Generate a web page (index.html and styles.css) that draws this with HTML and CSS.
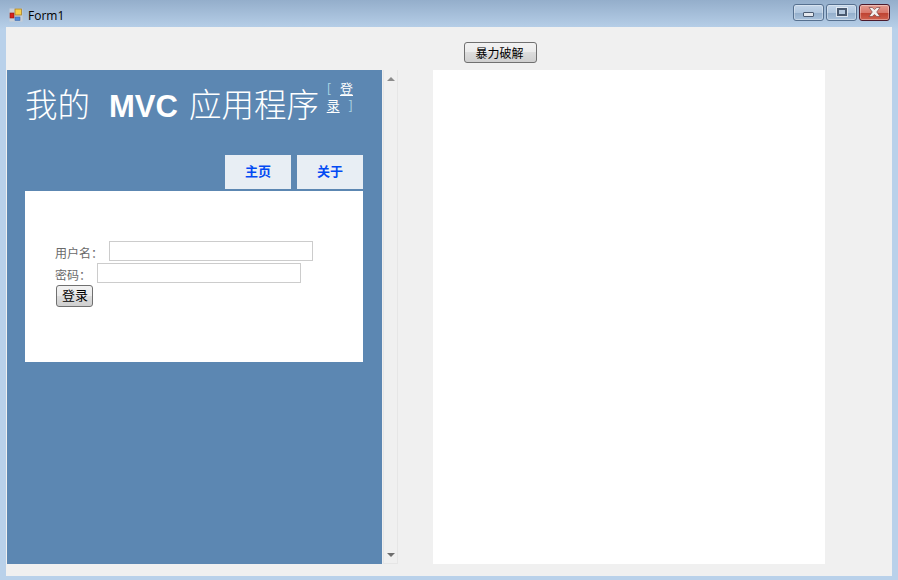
FILE: index.html
```html
<!DOCTYPE html>
<html lang="zh-CN">
    <head>
        <meta charset="UTF-8" />
        <title>Form1</title>
        <link rel="stylesheet" href="styles.css">
    </head>
    <body>
        <div class="ventana">
            <div class="barraTitulo">
                <svg class="iconoForm" width="14" height="14" viewBox="0 0 14 14">
                    <rect x="0.5" y="0.5" width="13" height="13" fill="#c9cfd6" />
                    <rect x="1" y="5" width="4" height="5" fill="#d8231c" stroke="#8c1410" stroke-width="0.6" />
                    <rect x="6" y="1" width="6.5" height="6" fill="#f7cf4a" stroke="#a9812a" stroke-width="0.8" />
                    <rect x="6" y="9" width="5" height="3.5" fill="#4f8bdc" stroke="#3c69ad" stroke-width="0.6" />
                </svg>
                <span class="tituloForm">Form1</span>
                <div class="botonesVentana">
                    <div class="botonVentana">
                        <span class="glifoMin"></span>
                    </div>
                    <div class="botonVentana botonMax">
                        <span class="glifoMax"></span>
                    </div>
                    <div class="botonVentana botonCerrar">
                        <svg width="13" height="10" viewBox="0 0 13 10">
                            <path d="M1 .5h3.2L6.500 2.500 8.800 .5H12L8.700 5 12 9.500H8.800L6.500 7.500 4.200 9.500H1L4.300 5z" fill="#f4f0ef" stroke="#6b3a3a" stroke-width="0.6" />
                        </svg>
                    </div>
                </div>
            </div>
            <div class="cliente">
                <div class="filaBoton">
                    <button class="botonWin botonCrack">暴力破解</button>
                </div>
                <div class="filaPaneles">
                    <div class="navegador">
                        <div class="pagina">
                            <header class="cabecera">
                                <h1 class="tituloApp">我的 <b>MVC</b> 应用程序</h1>
                                <div class="zonaLogin">[ <a href="#">登录</a> ]</div>
                            </header>
                            <nav class="menu">
                                <a href="#">主页</a>
                                <a href="#">关于</a>
                            </nav>
                            <div class="contenido">
                                <div class="filaCampo">
                                    <label class="etiqueta etiquetaUsuario">用户名：</label>
                                    <input class="campo" type="text">
                                </div>
                                <div class="filaCampo">
                                    <label class="etiqueta etiquetaClave">密码：</label>
                                    <input class="campo" type="password">
                                </div>
                                <button class="botonWin botonLogin">登录</button>
                            </div>
                        </div>
                    </div>
                    <div class="scroll">
                        <span class="flechaArriba"></span>
                        <span class="flechaAbajo"></span>
                    </div>
                    <div class="panelBlanco"></div>
                </div>
            </div>
        </div>
    </body>
</html>
```

FILE: styles.css
```css
*{
    margin: 0;
    padding: 0;
    box-sizing: border-box;
}
html, body{
    width: 898px;
    height: 580px;
    overflow: hidden;
}
.ventana{
    width: 898px;
    height: 580px;
    padding: 0 6px 4px 6px;
    background: linear-gradient(to bottom, #94aecb 0, #b9d1ea 30px, #b9d1ea 100%);
    font-family: "Noto Sans CJK SC", sans-serif;
}
.barraTitulo{
    height: 27px;
    display: flex;
    align-items: center;
    padding-top: 4px;
    padding-left: 3px;
    padding-right: 2px;
}
.iconoForm{
    margin-top: -1px;
}
.tituloForm{
    margin-left: 5px;
    font-family: "Open Sans", sans-serif;
    font-size: 12px;
    color: #000;
}
.botonesVentana{
    margin-left: auto;
    margin-top: -7px;
    display: flex;
    gap: 2px;
}
.botonVentana{
    width: 31px;
    height: 17px;
    display: flex;
    align-items: center;
    justify-content: center;
    border: 1px solid #56708f;
    border-radius: 3px;
    background: linear-gradient(to bottom, #c3d5e9 0, #b1c7df 50%, #93aecb 52%, #a9c2dc 100%);
    box-shadow: inset 0 0 0 1px rgba(255, 255, 255, 0.35);
}
.botonCerrar{
    border-color: #4b1a2c;
    background: linear-gradient(to bottom, #e39a8f 0, #d9786b 50%, #bd4130 52%, #d0614f 100%);
}
.glifoMin{
    width: 11px;
    height: 5px;
    margin-top: 5px;
    background: #e4e8ee;
    border: 1px solid #4a5a70;
    border-radius: 1px;
}
.glifoMax{
    width: 10px;
    height: 8px;
    border: 2px solid #4a5a70;
    background: #b5c9df;
    box-shadow: 0 0 0 1px rgba(235, 240, 246, 0.8);
}
.cliente{
    height: 549px;
    background-color: #f0f0f0;
}
.filaBoton{
    height: 43px;
    display: flex;
    align-items: flex-start;
    padding-top: 15px;
    padding-left: 458px;
}
.botonWin{
    border: 1px solid #707070;
    border-radius: 3px;
    background: linear-gradient(to bottom, #f2f2f2 0, #ebebeb 50%, #dddddd 50%, #cfcfcf 100%);
    color: #000;
    font-family: "Noto Sans CJK SC", sans-serif;
    font-size: 12px;
    line-height: 1;
}
.botonCrack{
    width: 73px;
    height: 21px;
    padding-right: 2px;
}
.filaPaneles{
    display: flex;
    height: 494px;
}
.navegador{
    width: 375px;
    margin-left: 1px;
    background-color: #5c87b2;
}
.pagina{
    width: 356px;
    padding-left: 18px;
}
.cabecera{
    height: 85px;
    display: flex;
    align-items: flex-start;
}
.tituloApp{
    width: 302px;
    padding-top: 12px;
    font-size: 32.5px;
    line-height: 48px;
    font-weight: 300;
    color: #fff;
    white-space: pre;
    font-family: "Liberation Sans", "Noto Sans CJK SC", sans-serif;
}
.tituloApp b{
    font-size: 31px;
    font-weight: bold;
    margin-left: 10px;
    margin-right: 2px;
}
.zonaLogin{
    width: 28px;
    margin-top: 9px;
    margin-left: -2px;
    font-size: 13px;
    line-height: 17px;
    text-align: right;
    word-spacing: 6px;
    color: #add8e6;
}
.zonaLogin a{
    color: #fff;
    text-decoration: underline;
    text-decoration-skip-ink: none;
    text-decoration-thickness: 1px;
    text-underline-offset: 2px;
}
.menu{
    height: 36px;
    display: flex;
    justify-content: flex-end;
    gap: 6px;
}
.menu a{
    width: 66px;
    height: 34px;
    background-color: #e8eef4;
    color: #034af3;
    font-size: 13px;
    font-weight: bold;
    line-height: 31px;
    text-align: center;
    text-decoration: none;
}
.contenido{
    width: 338px;
    height: 171px;
    padding-top: 50px;
    padding-left: 30px;
    background-color: #fff;
}
.filaCampo{
    height: 22px;
    display: flex;
}
.etiqueta{
    color: #696969;
    font-size: 12px;
    line-height: 24px;
}
.etiquetaUsuario{
    width: 54px;
}
.etiquetaClave{
    width: 42px;
}
.campo{
    width: 204px;
    height: 20px;
    border: 1px solid #cccccc;
    background-color: #fff;
}
.botonLogin{
    display: block;
    width: 37px;
    height: 22px;
    margin-left: 1px;
    padding-bottom: 4px;
    padding-left: 1px;
    font-size: 13px;
}
.scroll{
    width: 15px;
    margin-left: 1px;
    display: flex;
    flex-direction: column;
    justify-content: space-between;
    align-items: center;
    padding: 7px 0 6px 0;
    background-color: #f0f0f0;
    border-left: 1px solid #e6e6e6;
    border-right: 1px solid #e6e6e6;
    border-bottom: 1px solid #e6e6e6;
}
.flechaArriba{
    width: 0;
    height: 0;
    border-left: 4px solid transparent;
    border-right: 4px solid transparent;
    border-bottom: 4px solid #8c8c8c;
}
.flechaAbajo{
    width: 0;
    height: 0;
    border-left: 4px solid transparent;
    border-right: 4px solid transparent;
    border-top: 4px solid #6e6e6e;
}
.panelBlanco{
    width: 392px;
    margin-left: 35px;
    background-color: #fff;
}
```
